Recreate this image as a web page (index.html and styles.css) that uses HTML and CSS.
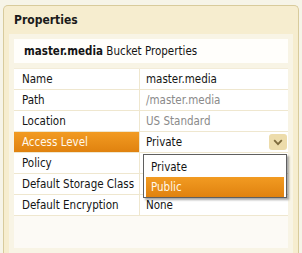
FILE: index.html
```html
<!DOCTYPE html>
<html>
<head>
<meta charset="utf-8">
<link rel="stylesheet" href="styles.css">
</head>
<body>
<div class="panel">
  <div class="panel-title">Properties</div>
  <div class="panel-body">
    <div class="heading"><b>master.media</b> Bucket Properties</div>
    <div class="grid">
      <div class="row"><div class="label">Name</div><div class="value">master.media</div></div>
      <div class="row"><div class="label">Path</div><div class="value muted">/master.media</div></div>
      <div class="row"><div class="label">Location</div><div class="value muted">US Standard</div></div>
      <div class="row"><div class="label selected">Access Level</div><div class="value combo">Private<span class="drop-btn"><svg width="10" height="7" viewBox="0 0 10 7"><path d="M1.2 1.2 L5 5.2 L8.8 1.2" fill="none" stroke="#7d6a3c" stroke-width="1.8"/></svg></span>
        <div class="popup">
          <div class="opt">Private</div>
          <div class="opt active">Public</div>
        </div>
      </div></div>
      <div class="row"><div class="label">Policy</div><div class="value"></div></div>
      <div class="row"><div class="label">Default Storage Class</div><div class="value"></div></div>
      <div class="row"><div class="label">Default Encryption</div><div class="value">None</div></div>
    </div>
  </div>
</div>
</body>
</html>
```
FILE: styles.css
```css
html, body {
  margin: 0;
  padding: 0;
}
body {
  background: #f6f4e8;
  height: 253px;
  overflow: hidden;
  font-family: "DejaVu Sans Condensed", "Liberation Sans", sans-serif;
  font-size: 11.5px;
  color: #141414;
}
.panel {
  margin: 5px 0 0 3px;
  width: 294px;
  height: 247px;
  border: 1px solid #d8cb9c;
  border-bottom: none;
  border-radius: 5px 5px 0 0;
  background: #f6edcf;
}
.panel-title {
  height: 28px;
  line-height: 28px;
  padding-left: 10px;
  font-weight: bold;
  font-size: 12px;
  color: #1a1a1a;
}
.panel-body {
  margin: 0 5px;
  padding: 5px;
  background: #f8f4e5;
  height: 209px;
}
.heading {
  height: 24px;
  line-height: 24px;
  padding-left: 10px;
  background: #fffefb;
}
.heading b {
  font-weight: bold;
}
.grid {
  margin-top: 5px;
  background: #fcfaf5;
  height: 179px;
  border-top: 1px solid #f3ecd8;
}
.row {
  display: flex;
  height: 20px;
  line-height: 20px;
  border-bottom: 1px solid #efe7cf;
  background: #fff;
}
.label {
  width: 117px;
  padding-left: 8px;
  border-right: 1px solid #efe7cf;
  white-space: nowrap;
}
.label.selected {
  background: linear-gradient(#f29b22, #e0820f);
  color: #fff8ea;
}
.value {
  flex: 1;
  padding-left: 6px;
  position: relative;
}
.muted {
  color: #8a8a8a;
}
.drop-btn {
  position: absolute;
  right: 1px;
  top: 2px;
  width: 18px;
  height: 16px;
  border-radius: 3px;
  background: #eddcab;
  display: flex;
  align-items: center;
  justify-content: center;
}
.popup {
  position: absolute;
  left: 3px;
  top: 22px;
  width: 144px;
  box-sizing: border-box;
  border: 1px solid #5f5f5f;
  background: #fff;
  padding: 2px 2px 0 2px;
  box-shadow: 2px 2px 2px rgba(0, 0, 0, 0.35);
  z-index: 2;
}
.opt {
  height: 20px;
  line-height: 20px;
  padding-left: 5px;
}
.opt.active {
  background: linear-gradient(#f29b22, #e0820f);
  color: #fff8ea;
}
```
